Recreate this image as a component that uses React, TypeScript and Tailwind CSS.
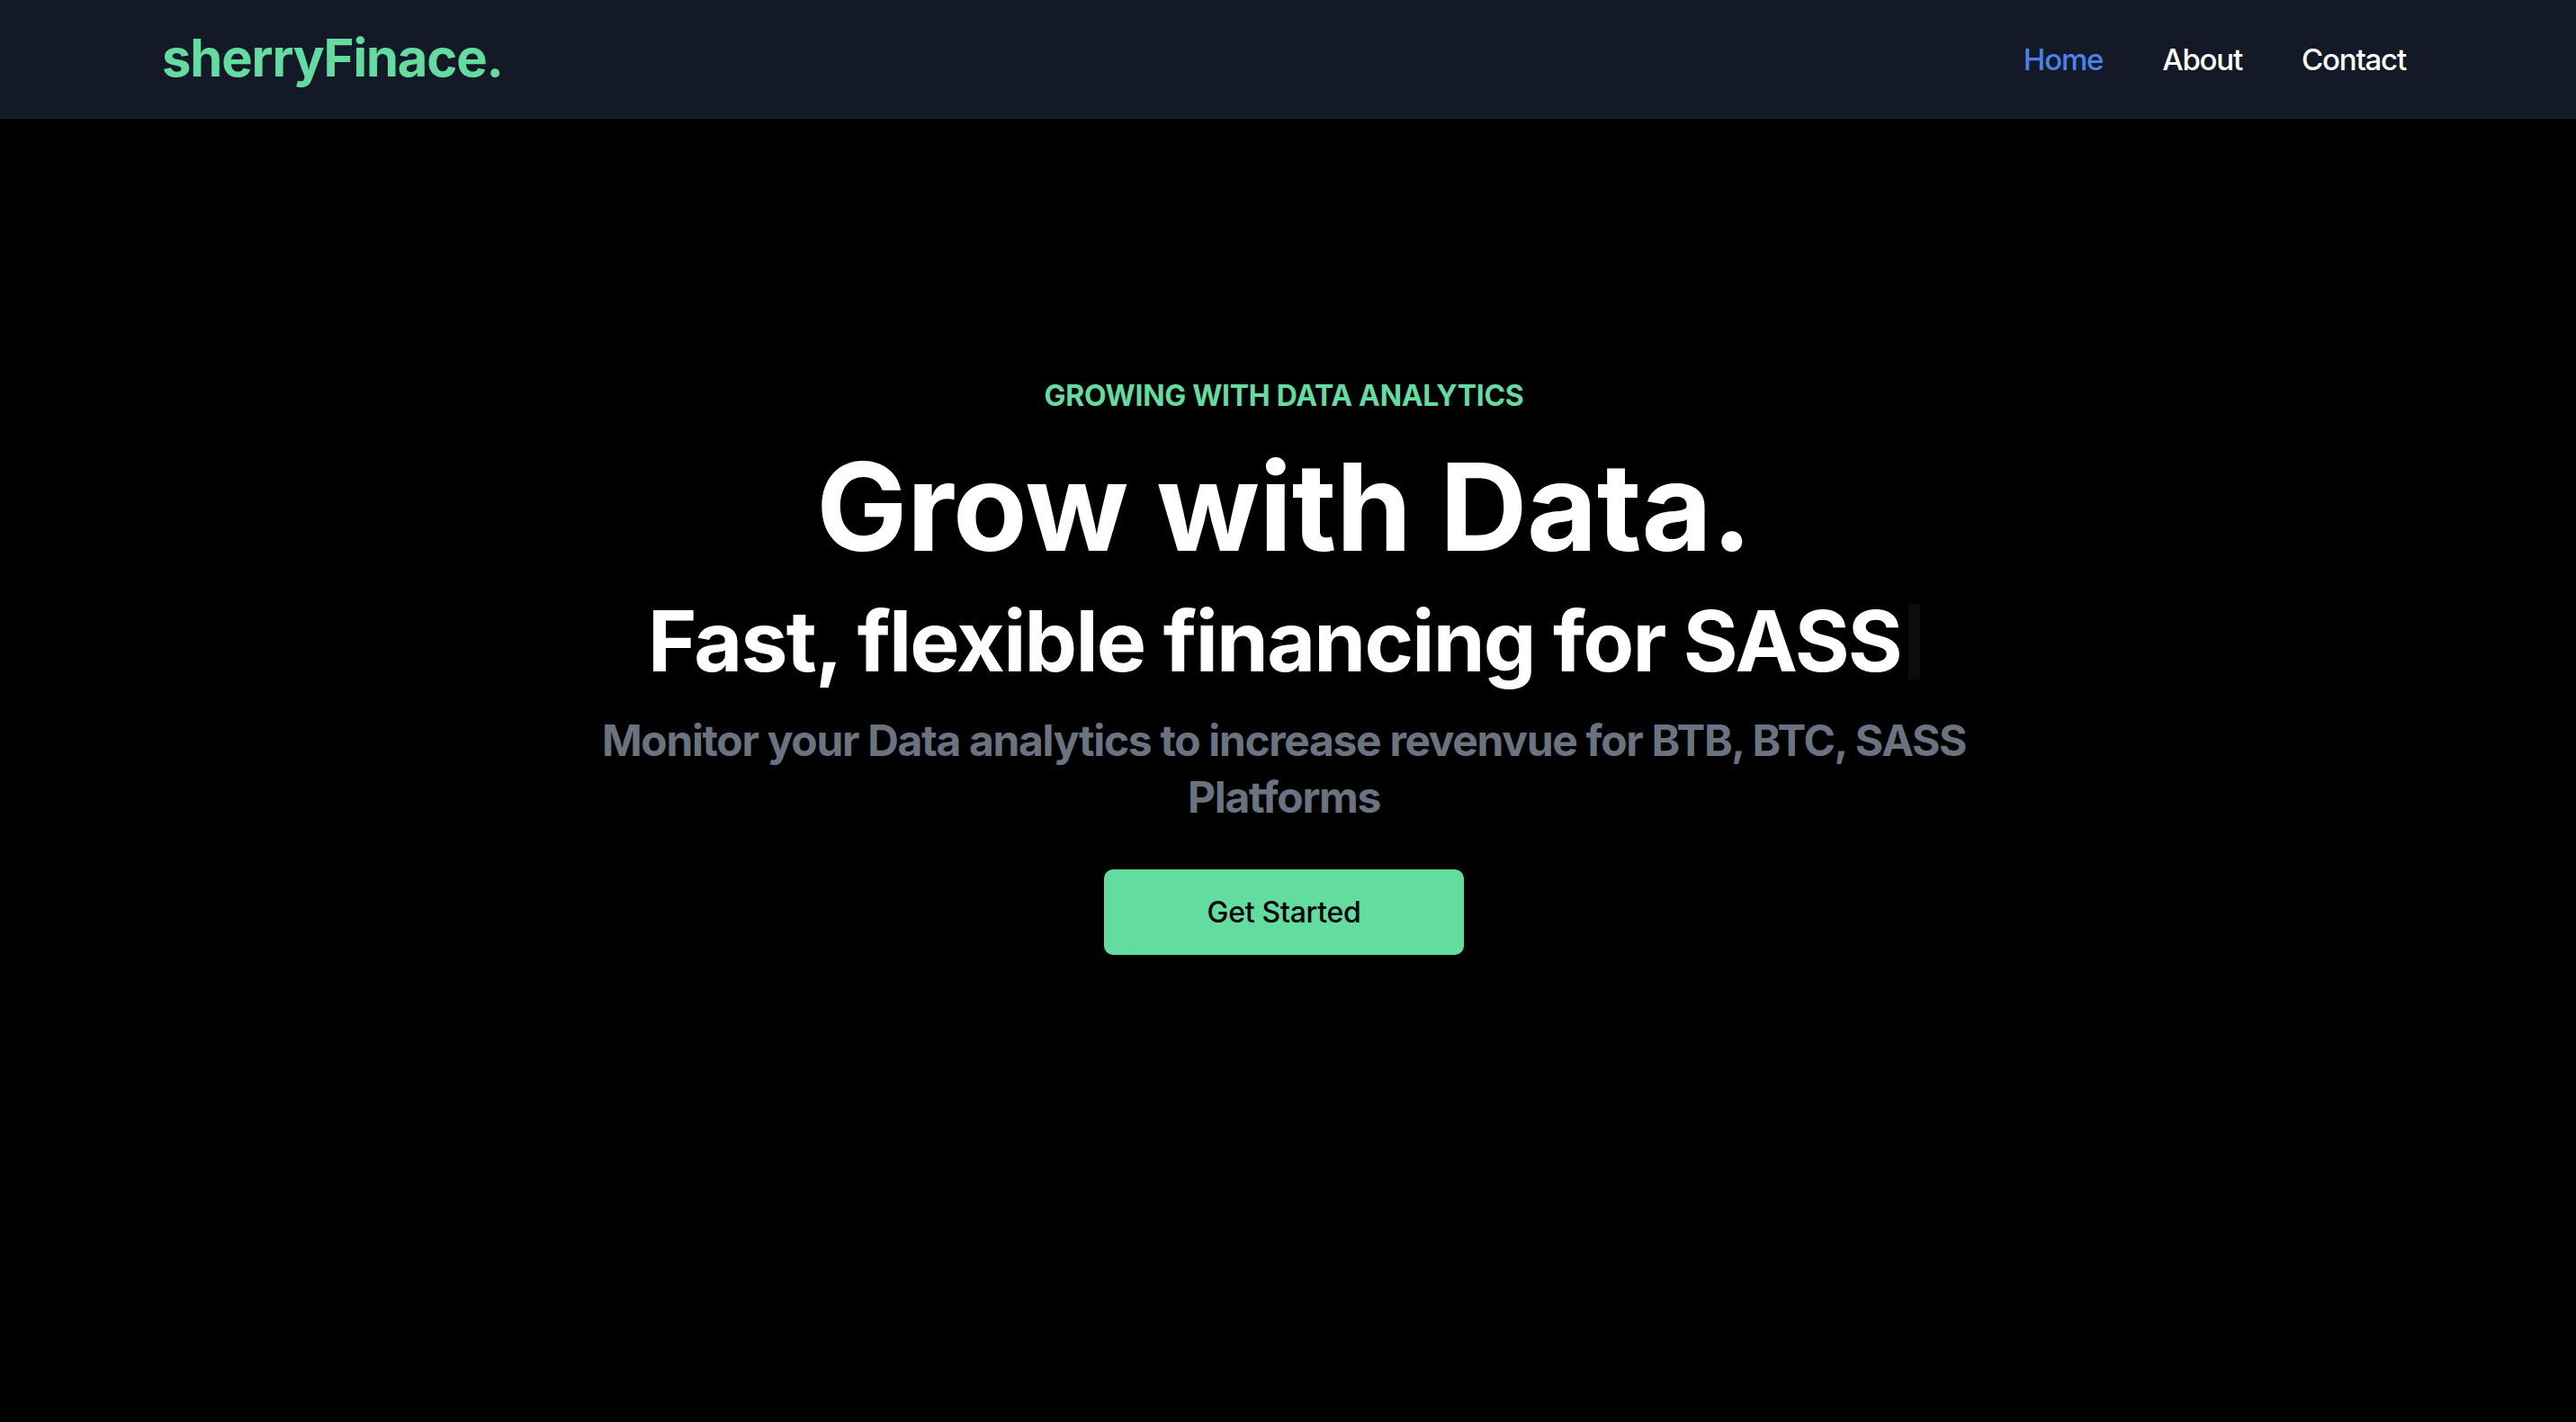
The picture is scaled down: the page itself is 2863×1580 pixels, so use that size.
// Landing page: top nav + centered hero

const navLinks = [
  { label: 'Home', active: true },
  { label: 'About', active: false },
  { label: 'Contact', active: false },
];

function Navbar() {
  return (
    <nav className="h-[132px] bg-[#131927] flex items-center justify-between pl-[180px] pr-[156px]">
      <h1 className="text-[58px] leading-none font-bold text-[#63dca0] tracking-[-1.2px] -mt-[4px]">sherryFinace.</h1>
      <ul className="flex items-center">
        {navLinks.map((link) => (
          <li
            key={link.label}
            className={`px-[33px] text-[33px] leading-none font-medium tracking-[-1.2px] ${
              link.active ? 'text-[#4b82ea]' : 'text-white'
            }`}
          >
            {link.label}
          </li>
        ))}
      </ul>
    </nav>
  );
}

function Hero() {
  return (
    <section className="flex flex-col items-center text-center pt-[284px] pr-[9px]">
      <p className="text-[32px] leading-[48px] font-bold text-[#63dca0] tracking-[-0.3px]">GROWING WITH DATA ANALYTICS</p>
      <h1 className="mt-[32px] text-[135px] leading-none font-bold text-white tracking-[-0.5px]">Grow with Data.</h1>
      <div className="mt-[35px] flex items-center h-[93px]">
        <p className="text-[93px] leading-none font-bold text-white tracking-[-1.8px]">
          Fast, flexible financing for SASS
        </p>
        <span className="ml-[8px] w-[13px] h-[84px] bg-[#0c0c0c] inline-block" />
      </div>
      <p className="mt-[32px] max-w-[1560px] text-[48px] leading-[63px] font-bold text-[#6b7280] tracking-[-1.35px]">
        Monitor your Data analytics to increase revenvue for BTB, BTC, SASS Platforms
      </p>
      <button className="mt-[49px] w-[400px] h-[95px] rounded-[10px] bg-[#63dca0] text-black text-[32px] font-medium tracking-[-0.3px]">
        Get Started
      </button>
    </section>
  );
}

export default function App() {
  return (
    <div className="min-h-screen bg-black" style={{ fontFamily: 'Inter, "Noto Sans", sans-serif' }}>
      <Navbar />
      <Hero />
    </div>
  );
}
